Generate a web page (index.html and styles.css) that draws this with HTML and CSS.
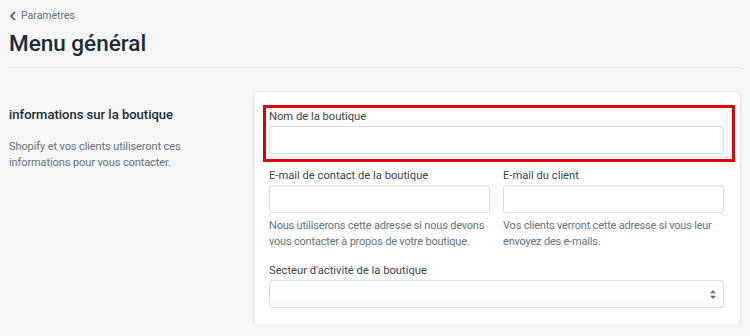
FILE: index.html
```html
<!DOCTYPE html>
<html lang="fr">
<head>
    <meta charset="UTF-8">
    <meta name="viewport" content="width=device-width, initial-scale=1.0">
    <title>Menu général</title>
    <link rel="stylesheet" href="styles.css">
</head>
<body>
    <div class="page">
        <div class="header">
            <a class="breadcrumb" href="#">
                <svg width="8" height="10" viewBox="0 0 8 10"><path d="M6 1 L2 5 L6 9" fill="none" stroke="#454f5b" stroke-width="1.6"/></svg>
                <span>Paramètres</span>
            </a>
            <h1 class="title">Menu général</h1>
        </div>

        <div class="section">
            <div class="section-info">
                <h2>informations sur la boutique</h2>
                <p>Shopify et vos clients utiliseront ces informations pour vous contacter.</p>
            </div>

            <div class="card">
                <div class="field highlight">
                    <label>Nom de la boutique</label>
                    <input type="text" class="input">
                </div>

                <div class="row">
                    <div class="field">
                        <label>E-mail de contact de la boutique</label>
                        <input type="text" class="input">
                        <p class="help">Nous utiliserons cette adresse si nous devons vous contacter à propos de votre boutique.</p>
                    </div>
                    <div class="field">
                        <label>E-mail du client</label>
                        <input type="text" class="input">
                        <p class="help">Vos clients verront cette adresse si vous leur envoyez des e-mails.</p>
                    </div>
                </div>

                <div class="field">
                    <label>Secteur d'activité de la boutique</label>
                    <div class="select">
                        <svg width="6" height="9" viewBox="0 0 6 9"><path d="M3 0 L6 3.2 H0 Z M3 9 L0 5.8 H6 Z" fill="#637381"/></svg>
                    </div>
                </div>
            </div>
        </div>
    </div>
</body>
</html>
```

FILE: styles.css
```css
body {
    margin: 0;
    background-color: #f4f6f8;
    font-family: Roboto, Lato, sans-serif;
    color: #212b36;
}

.page {
    padding: 0 10px 0 8px;
}

.header {
    padding-top: 8px;
    border-bottom: 1px solid #e3e6e9;
    padding-bottom: 10px;
}

.breadcrumb {
    display: flex;
    align-items: center;
    gap: 4px;
    padding-left: 1px;
    color: #637381;
    font-size: 10.5px;
    text-decoration: none;
    line-height: 16px;
}

.title {
    margin: 5px 0 0 1px;
    font-size: 22.5px;
    font-weight: 500;
    line-height: 28px;
}

.section {
    display: flex;
    margin-top: 24px;
}

.section-info {
    width: 245px;
    padding-left: 1px;
}

.section-info h2 {
    margin: 14px 0 0;
    font-size: 13px;
    font-weight: 500;
    line-height: 18px;
}

.section-info p {
    margin: 15px 0 0;
    font-size: 11px;
    letter-spacing: -0.1px;
    line-height: 16px;
    color: #637381;
    width: 190px;
}

.card {
    flex: 1;
    background: #fff;
    border-radius: 3px;
    box-shadow: 0 0 0 1px rgba(63, 63, 68, 0.05), 0 1px 3px 0 rgba(63, 63, 68, 0.15);
    padding: 13px 16px 16px 15px;
}

.field label {
    display: block;
    font-size: 11.2px;
    line-height: 16px;
    color: #3c4550;
    margin-bottom: 1px;
}

.input,
.select {
    display: block;
    box-sizing: border-box;
    width: 100%;
    height: 28px;
    margin: 0;
    border: 1px solid #dadfe4;
    border-radius: 3px;
    background: #fff;
    box-shadow: inset 0 1px 0 0 rgba(99, 115, 129, 0.05);
}

.highlight {
    border: 3px solid #e00000;
    margin: 0 -11px 0 -6px;
    padding: 1px 8px 5px 3px;
}

.row {
    display: flex;
    gap: 13px;
    margin-top: 6px;
}

.row .field {
    flex: 1;
}

.help {
    margin: 5px 0 0;
    font-size: 11px;
    letter-spacing: -0.2px;
    line-height: 16px;
    color: #637381;
}

.row + .field {
    margin-top: 13px;
}

.select {
    display: flex;
    align-items: center;
    justify-content: flex-end;
    padding-right: 7px;
    background: linear-gradient(#fff, #f9fafb);
}
```
